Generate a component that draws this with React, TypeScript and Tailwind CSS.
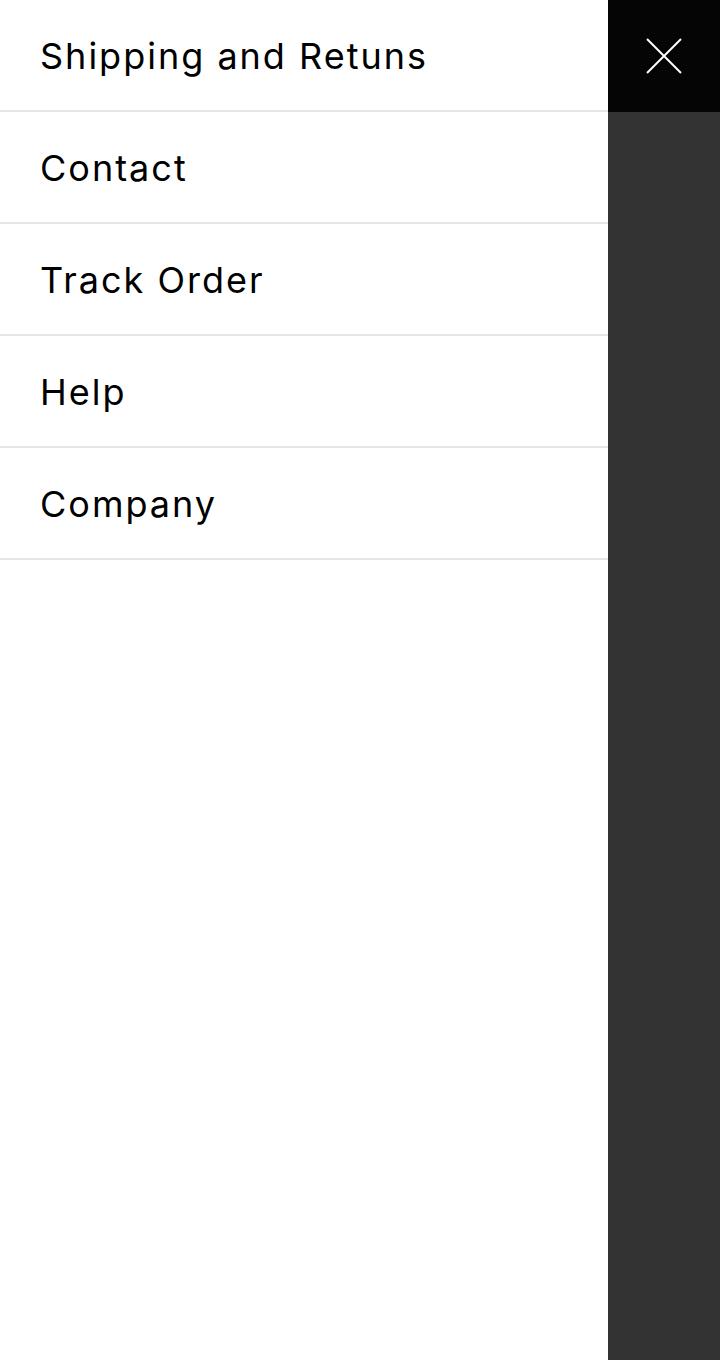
export default function App() {
  const links = ["Shipping and Retuns", "Contact", "Track Order", "Help", "Company"];

  return (
    <div className="flex h-screen w-full bg-[#333333]" style={{ fontFamily: "Inter, 'Liberation Sans', sans-serif" }}>
      {/* Drawer */}
      <nav className="w-[608px] h-full bg-white">
        {links.map((label) => (
          <a
            key={label}
            href="#"
            className="flex items-center h-[112px] px-10 pt-[2px] border-b-2 border-[#e6e6e6] text-[36px] tracking-[2px] text-black leading-none"
          >
            {label}
          </a>
        ))}
      </nav>

      {/* Overlay + close */}
      <div className="flex-1">
        <button className="w-[112px] h-[112px] bg-[#050505] flex items-center justify-center">
          <svg width="36" height="36" viewBox="0 0 36 36" fill="none" stroke="white" strokeWidth={2}>
            <path d="M1 1L35 35M35 1L1 35" />
          </svg>
        </button>
      </div>
    </div>
  );
}
